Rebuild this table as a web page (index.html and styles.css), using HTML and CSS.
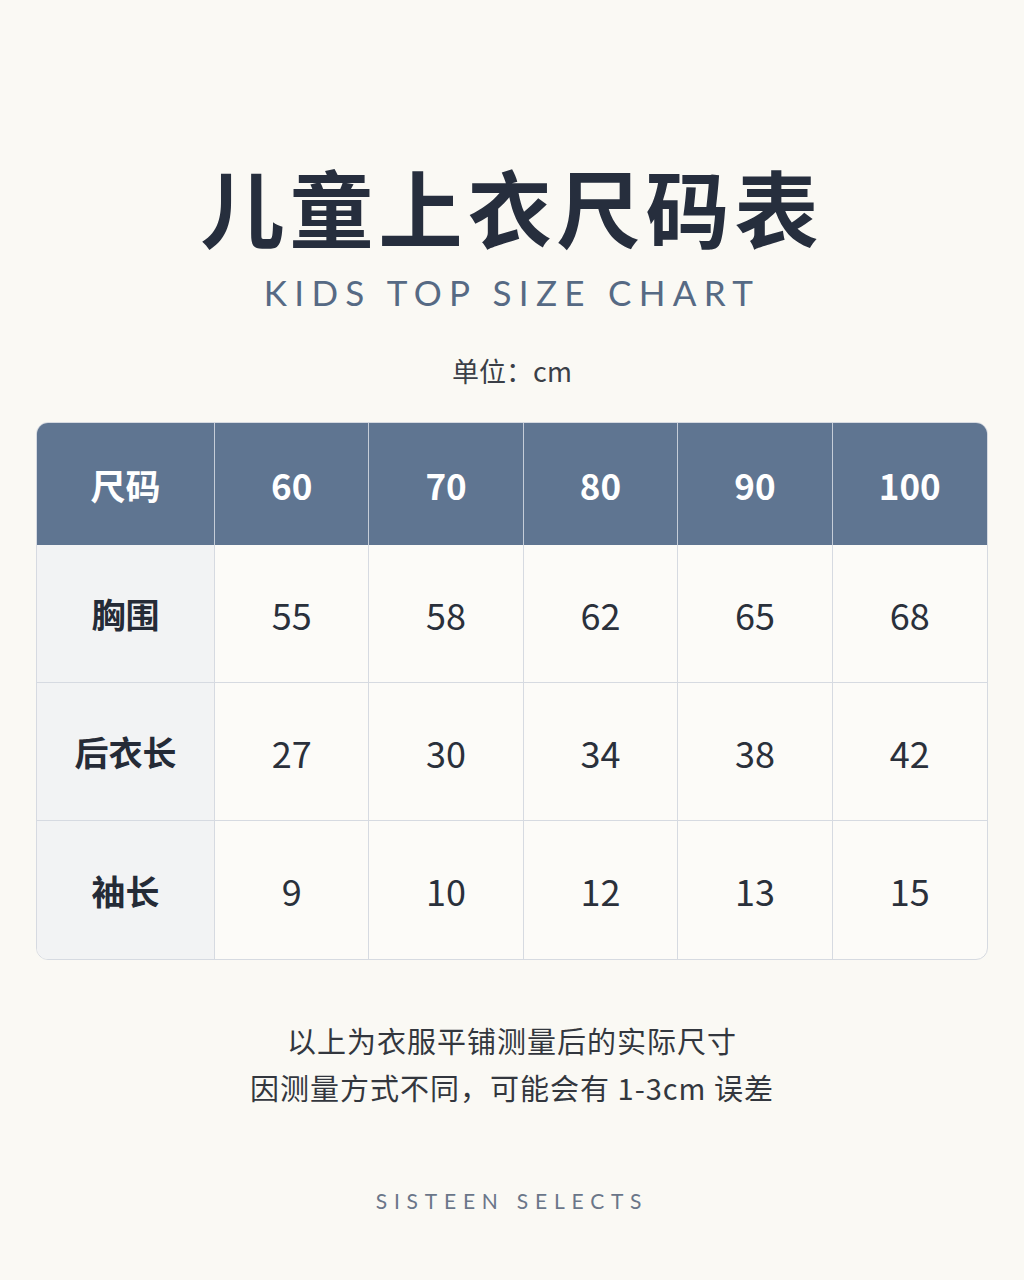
FILE: index.html
```html
<!DOCTYPE html>
<html lang="zh">
<head>
<meta charset="utf-8">
<link rel="stylesheet" href="styles.css">
</head>
<body>
<div class="page">
  <h1 class="title">儿童上衣尺码表</h1>
  <div class="subtitle">KIDS TOP SIZE CHART</div>
  <div class="unit">单位：cm</div>
  <div class="table">
    <div class="cell head first">尺码</div>
    <div class="cell head">60</div>
    <div class="cell head">70</div>
    <div class="cell head">80</div>
    <div class="cell head">90</div>
    <div class="cell head last">100</div>

    <div class="cell label">胸围</div>
    <div class="cell val">55</div>
    <div class="cell val">58</div>
    <div class="cell val">62</div>
    <div class="cell val">65</div>
    <div class="cell val last">68</div>

    <div class="cell label">后衣长</div>
    <div class="cell val">27</div>
    <div class="cell val">30</div>
    <div class="cell val">34</div>
    <div class="cell val">38</div>
    <div class="cell val last">42</div>

    <div class="cell label bottom">袖长</div>
    <div class="cell val bottom">9</div>
    <div class="cell val bottom">10</div>
    <div class="cell val bottom">12</div>
    <div class="cell val bottom">13</div>
    <div class="cell val bottom last">15</div>
  </div>
  <div class="notes">
    <p>以上为衣服平铺测量后的实际尺寸</p>
    <p>因测量方式不同，可能会有 1-3cm 误差</p>
  </div>
  <div class="brand">SISTEEN SELECTS</div>
</div>
</body>
</html>
```
FILE: styles.css
```css
* { box-sizing: border-box; }
html, body {
  margin: 0;
  padding: 0;
  background: #faf9f4;
}
body {
  font-family: "Noto Sans CJK SC", "Noto Sans", sans-serif;
  color: #262d3a;
}
.page {
  width: 1024px;
  height: 1280px;
  display: flex;
  flex-direction: column;
  align-items: center;
  padding-top: 150px;
}
.title {
  margin: 0;
  font-size: 84px;
  font-weight: 700;
  line-height: 112px;
  letter-spacing: 5px;
  color: #262e3d;
}
.subtitle {
  margin-top: 8px;
  font-family: "Lato", "Noto Sans", sans-serif;
  font-size: 35px;
  font-weight: 400;
  letter-spacing: 7.3px;
  line-height: 44px;
  color: #566a84;
}
.unit {
  margin-top: 37px;
  font-size: 27px;
  line-height: 40px;
  color: #3b3f47;
}
.table {
  margin-top: 31px;
  width: 952px;
  display: grid;
  grid-template-columns: 178px repeat(5, 1fr);
  grid-template-rows: 122px 138px 138px 138px;
  border: 1px solid #d6dae1;
  border-radius: 12px;
  overflow: hidden;
  background: #fcfbf8;
}
.cell {
  display: flex;
  align-items: center;
  justify-content: center;
  border-right: 1px solid #d6dae1;
  border-bottom: 1px solid #d6dae1;
}
.cell.last { border-right: none; }
.cell.bottom { border-bottom: none; }
.head {
  background: #5f7591;
  color: #ffffff;
  font-size: 35px;
  font-weight: 700;
  border-right-color: #c5cdd8;
  border-bottom: none;
}
.label {
  background: #f2f3f4;
  font-size: 34px;
  font-weight: 700;
  color: #252b37;
}
.val {
  font-size: 36px;
  font-weight: 400;
  color: #2a303b;
}
.notes {
  margin-top: 57px;
  text-align: center;
  font-size: 29px;
  letter-spacing: 1px;
  line-height: 47px;
  color: #33373e;
}
.notes p { margin: 0; }
.brand {
  margin-top: 77px;
  font-family: "Lato", "Noto Sans", sans-serif;
  font-size: 21px;
  letter-spacing: 6.8px;
  color: #6a7689;
}
```
